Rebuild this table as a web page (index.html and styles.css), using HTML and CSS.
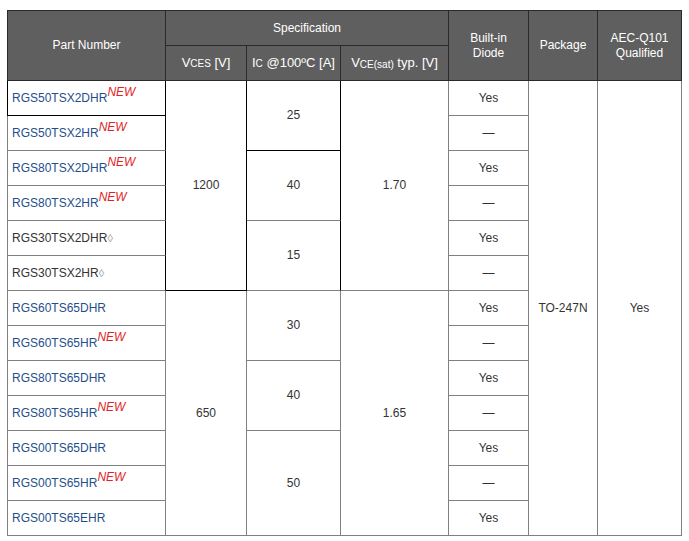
FILE: index.html
```html
<!DOCTYPE html>
<html>
<head>
<meta charset="utf-8">
<link rel="stylesheet" href="styles.css">
</head>
<body>
<table class="spec">
  <colgroup>
    <col class="c1"><col class="c2"><col class="c3"><col class="c4"><col class="c5"><col class="c6"><col class="c7">
  </colgroup>
  <thead>
    <tr class="h1">
      <th rowspan="2" class="first">Part Number</th>
      <th colspan="3">Specification</th>
      <th rowspan="2">Built-in<br>Diode</th>
      <th rowspan="2">Package</th>
      <th rowspan="2">AEC-Q101<br>Qualified</th>
    </tr>
    <tr class="h2">
      <th>V<span class="sub">CES</span> [V]</th>
      <th>I<span class="sub">C</span> @100ºC [A]</th>
      <th>V<span class="sub low">CE(sat)</span> typ. [V]</th>
    </tr>
  </thead>
  <tbody>
    <tr>
      <td class="pn first bk-r bk-b bk-l"><a class="link">RGS50TSX2DHR</a><span class="new">NEW</span></td>
      <td rowspan="6" class="bk-r bk-b">1200</td>
      <td rowspan="2" class="bk-r bk-b">25</td>
      <td rowspan="6">1.70</td>
      <td>Yes</td>
      <td rowspan="13">TO-247N</td>
      <td rowspan="13">Yes</td>
    </tr>
    <tr>
      <td class="pn first bk-r"><a class="link">RGS50TSX2HR</a><span class="new">NEW</span></td>
      <td class="dash">—</td>
    </tr>
    <tr>
      <td class="pn first bk-r"><a class="link">RGS80TSX2DHR</a><span class="new">NEW</span></td>
      <td rowspan="2" class="bk-r">40</td>
      <td>Yes</td>
    </tr>
    <tr>
      <td class="pn first bk-r"><a class="link">RGS80TSX2HR</a><span class="new">NEW</span></td>
      <td class="dash">—</td>
    </tr>
    <tr>
      <td class="pn first bk-r">RGS30TSX2DHR<span class="loz">◊</span></td>
      <td rowspan="2" class="bk-r">15</td>
      <td>Yes</td>
    </tr>
    <tr>
      <td class="pn first bk-r">RGS30TSX2HR<span class="loz">◊</span></td>
      <td class="dash">—</td>
    </tr>
    <tr>
      <td class="pn first"><a class="link">RGS60TS65DHR</a></td>
      <td rowspan="7">650</td>
      <td rowspan="2">30</td>
      <td rowspan="7">1.65</td>
      <td>Yes</td>
    </tr>
    <tr>
      <td class="pn first"><a class="link">RGS60TS65HR</a><span class="new">NEW</span></td>
      <td class="dash">—</td>
    </tr>
    <tr>
      <td class="pn first"><a class="link">RGS80TS65DHR</a></td>
      <td rowspan="2">40</td>
      <td>Yes</td>
    </tr>
    <tr>
      <td class="pn first"><a class="link">RGS80TS65HR</a><span class="new">NEW</span></td>
      <td class="dash">—</td>
    </tr>
    <tr>
      <td class="pn first"><a class="link">RGS00TS65DHR</a></td>
      <td rowspan="3">50</td>
      <td>Yes</td>
    </tr>
    <tr>
      <td class="pn first"><a class="link">RGS00TS65HR</a><span class="new">NEW</span></td>
      <td class="dash">—</td>
    </tr>
    <tr>
      <td class="pn first"><a class="link">RGS00TS65EHR</a></td>
      <td>Yes</td>
    </tr>
  </tbody>
</table>
</body>
</html>
```
FILE: styles.css
```css
html, body {
  margin: 0;
  padding: 0;
  background: #ffffff;
}

body {
  padding: 10px 0 0 7px;
  font-family: "Liberation Sans", Arial, sans-serif;
  font-size: 12px;
  color: #333333;
}

.spec {
  border-collapse: separate;
  border-spacing: 0;
  table-layout: fixed;
  width: 675px;
}

.c1 { width: 159px; }
.c2 { width: 81px; }
.c3 { width: 94px; }
.c4 { width: 108px; }
.c5 { width: 80px; }
.c6 { width: 69px; }
.c7 { width: 84px; }

.spec th,
.spec td {
  box-sizing: border-box;
  padding: 0 0 1px 0;
  border-right: 1px solid #808080;
  border-bottom: 1px solid #808080;
  text-align: center;
  vertical-align: middle;
  line-height: 14px;
}

.spec th {
  background: #5f5f5f;
  color: #ffffff;
  font-weight: normal;
  border-right-color: #2a2a2a;
  border-bottom-color: #2a2a2a;
  line-height: 15px;
  padding-bottom: 0;
}

.spec .first {
  border-left: 1px solid #808080;
}

.spec th.first {
  border-left-color: #2a2a2a;
}

.h1 th {
  border-top: 1px solid #2a2a2a;
}

.h1 { height: 36px; }
.h2 { height: 35px; }
.spec tbody tr { height: 35px; }

.h2 th {
  font-size: 13px;
}

.sub {
  font-size: 10px;
}

.sub.low {
  vertical-align: -1px;
}

.spec td.pn {
  text-align: left;
  padding-left: 4px;
  white-space: nowrap;
}

.link {
  color: #1f4f8b;
  text-decoration: none;
}

.new {
  color: #e01f26;
  font-style: italic;
  vertical-align: 6px;
  line-height: 0;
}

.loz {
  color: #999999;
  font-size: 11px;
}

.dash {
  color: #333333;
}

.spec td.bk-r { border-right-color: #000000; }
.spec td.bk-b { border-bottom-color: #000000; }
.spec td.bk-l { border-left-color: #000000; }
```
